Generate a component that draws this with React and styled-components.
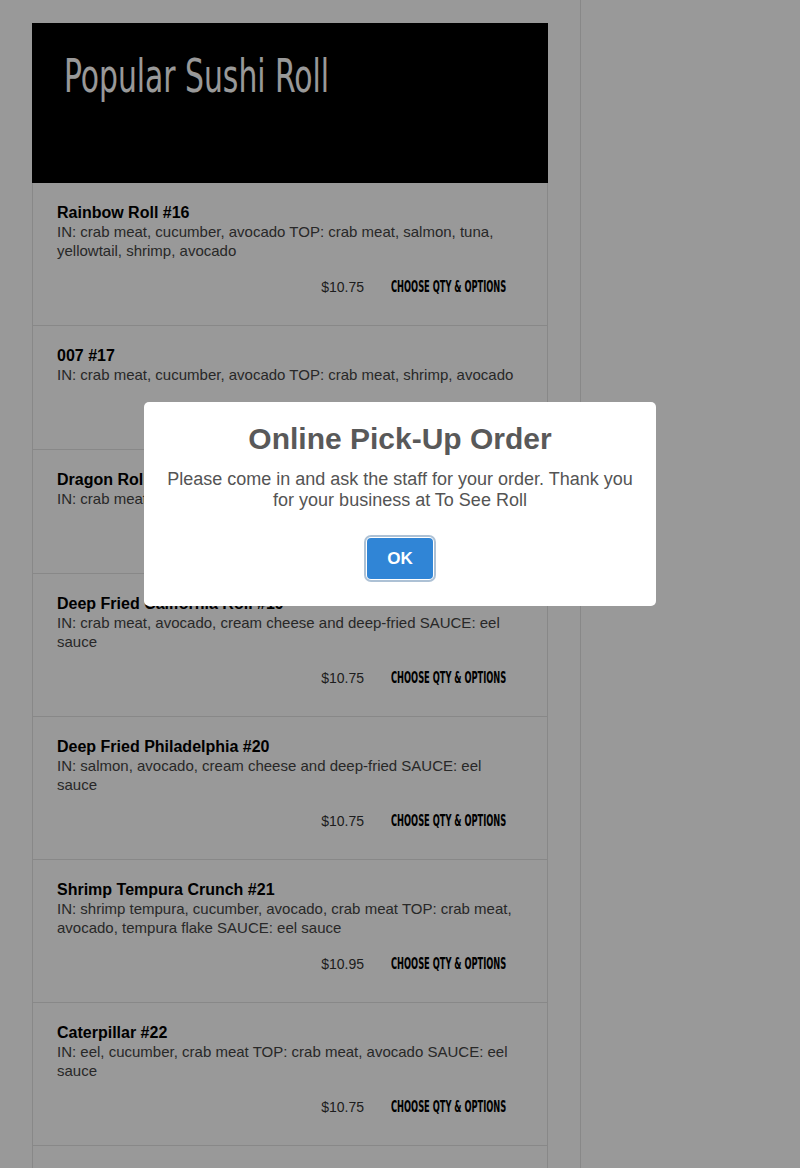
import styled, { createGlobalStyle } from "styled-components";

const GlobalStyle = createGlobalStyle`
  html, body {
    margin: 0;
    padding: 0;
    background: #fff;
    font-family: "Liberation Sans", Arial, sans-serif;
  }
  * {
    box-sizing: border-box;
  }
`;

const Page = styled.div`
  display: flex;
  min-height: 100vh;
`;

const Main = styled.div`
  width: 581px;
  padding: 23px 32px 0;
  border-right: 1px solid #e3e3e3;
`;

const Sidebar = styled.div`
  flex: 1;
`;

const Menu = styled.section`
  width: 516px;
`;

const Header = styled.div`
  height: 160px;
  background: #000;
  padding: 24px 32px;
`;

// condensed display face, squeezed to the width of the original
const Title = styled.h1`
  margin: 0;
  display: inline-block;
  font-family: "DejaVu Sans Condensed", "DejaVu Sans", sans-serif;
  font-weight: 400;
  font-size: 46px;
  line-height: 58px;
  color: #fff;
  white-space: nowrap;
  transform: scaleX(0.72);
  transform-origin: left center;
`;

const Item = styled.div`
  border: 1px solid #e3e3e3;
  border-top: none;
  padding: 20px 24px 20px;

  &:first-of-type {
    border-top: 1px solid #e3e3e3;
  }
`;

const Name = styled.div`
  font-size: 16px;
  font-weight: 700;
  line-height: 19px;
  color: #000;
`;

const Desc = styled.div`
  font-size: 15px;
  line-height: 19px;
  color: #444;
`;

const Row = styled.div`
  margin-top: 9px;
  display: flex;
  justify-content: flex-end;
  align-items: center;
  gap: 11px;
`;

const Price = styled.span`
  font-size: 14px;
  color: #333;
`;

const Choose = styled.button`
  border: none;
  background: transparent;
  padding: 8px 16px;
  height: 36px;
  width: 148px;
  text-align: left;
  font-family: "DejaVu Sans Condensed", "DejaVu Sans", sans-serif;
  font-weight: 700;
  font-size: 15px;
  line-height: 20px;
  color: #000;
  text-transform: uppercase;
  white-space: nowrap;
  cursor: pointer;

  span {
    display: inline-block;
    transform: scaleX(0.615);
    transform-origin: left center;
  }
`;

const Overlay = styled.div`
  position: fixed;
  inset: 0;
  background: rgba(0, 0, 0, 0.4);
  display: flex;
  justify-content: center;
  align-items: flex-start;
  padding-top: 402px;
`;

const Modal = styled.div`
  width: 512px;
  background: #fff;
  border-radius: 5px;
  padding: 20px 20px;
  text-align: center;
`;

const ModalTitle = styled.h2`
  margin: 0 0 13px;
  font-size: 30px;
  font-weight: 700;
  color: #595959;
`;

const ModalText = styled.div`
  font-size: 18px;
  color: #545454;
`;

const Actions = styled.div`
  margin: 27px 0 7px;
  display: flex;
  justify-content: center;
`;

const OkButton = styled.button`
  border: none;
  border-radius: 4px;
  background: #3085d6;
  color: #fff;
  font-family: "Liberation Sans", Arial, sans-serif;
  font-size: 17px;
  font-weight: 700;
  line-height: 19px;
  padding: 11px 20px;
  box-shadow: 0 0 0 1px #fff, 0 0 0 3px rgba(50, 100, 150, 0.4);
  cursor: pointer;
`;

const items = [
  {
    name: "Rainbow Roll #16",
    desc: "IN: crab meat, cucumber, avocado TOP: crab meat, salmon, tuna, yellowtail, shrimp, avocado",
    price: "$10.75",
  },
  {
    name: "007 #17",
    desc: "IN: crab meat, cucumber, avocado TOP: crab meat, shrimp, avocado",
    price: "$10.75",
  },
  {
    name: "Dragon Roll #18",
    desc: "IN: crab meat, cucumber TOP: eel, avocado SAUCE: eel sauce",
    price: "$10.75",
  },
  {
    name: "Deep Fried California Roll #19",
    desc: "IN: crab meat, avocado, cream cheese and deep-fried SAUCE: eel sauce",
    price: "$10.75",
  },
  {
    name: "Deep Fried Philadelphia #20",
    desc: "IN: salmon, avocado, cream cheese and deep-fried SAUCE: eel sauce",
    price: "$10.75",
  },
  {
    name: "Shrimp Tempura Crunch #21",
    desc: "IN: shrimp tempura, cucumber, avocado, crab meat TOP: crab meat, avocado, tempura flake SAUCE: eel sauce",
    price: "$10.95",
  },
  {
    name: "Caterpillar #22",
    desc: "IN: eel, cucumber, crab meat TOP: crab meat, avocado SAUCE: eel sauce",
    price: "$10.75",
  },
  {
    name: "Spider Roll #23",
    desc: "IN: soft shell crab, cucumber, avocado SAUCE: eel sauce",
    price: "$10.75",
  },
];

function App() {
  return (
    <>
      <GlobalStyle />
      <Page>
        <Main>
          <Menu>
            <Header>
              <Title>Popular Sushi Roll</Title>
            </Header>
            {items.map((item) => (
              <Item key={item.name}>
                <Name>{item.name}</Name>
                <Desc>{item.desc}</Desc>
                <Row>
                  <Price>{item.price}</Price>
                  <Choose>
                    <span>Choose Qty &amp; Options</span>
                  </Choose>
                </Row>
              </Item>
            ))}
          </Menu>
        </Main>
        <Sidebar />
      </Page>

      <Overlay>
        <Modal>
          <ModalTitle>Online Pick-Up Order</ModalTitle>
          <ModalText>
            Please come in and ask the staff for your order. Thank you for
            your business at To See Roll
          </ModalText>
          <Actions>
            <OkButton>OK</OkButton>
          </Actions>
        </Modal>
      </Overlay>
    </>
  );
}

export default App;
